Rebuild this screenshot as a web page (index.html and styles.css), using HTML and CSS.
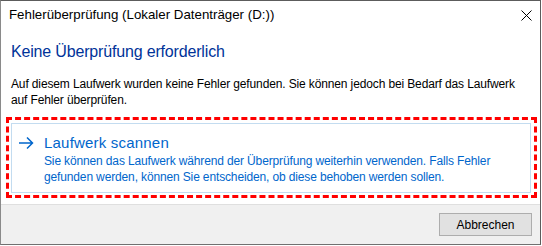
FILE: index.html
```html
<!DOCTYPE html>
<html lang="de">
<head>
    <meta charset="UTF-8">
    <title>Fehlerüberprüfung</title>
    <link rel="stylesheet" href="styles.css">
</head>
<body>
    <div class="window">
        <div class="titlebar">
            <span class="title">Fehlerüberprüfung (Lokaler Datenträger (D:))</span>
            <svg class="close" width="11" height="11" viewBox="0 0 11 11">
                <path d="M0.5 0.5 L10.5 10.5 M10.5 0.5 L0.5 10.5" stroke="#000" stroke-width="1" fill="none"/>
            </svg>
        </div>

        <div class="content">
            <h1 class="instruction">Keine Überprüfung erforderlich</h1>
            <p class="message">Auf diesem Laufwerk wurden keine Fehler gefunden. Sie können jedoch bei Bedarf das Laufwerk<br>auf Fehler überprüfen.</p>

            <div class="highlight">
                <div class="command-link">
                    <svg class="arrow" width="16" height="16" viewBox="0 0 16 16">
                        <path d="M1 8 H14.5 M9 2.5 L14.5 8 L9 13.5" stroke="#0066cc" stroke-width="1.5" fill="none"/>
                    </svg>
                    <div class="link-text">
                        <div class="link-title">Laufwerk scannen</div>
                        <div class="link-note">Sie können das Laufwerk während der Überprüfung weiterhin verwenden. Falls Fehler<br>gefunden werden, können Sie entscheiden, ob diese behoben werden sollen.</div>
                    </div>
                </div>
            </div>
        </div>

        <div class="footer">
            <button class="button">Abbrechen</button>
        </div>
    </div>
</body>
</html>
```

FILE: styles.css
```css
* {
    box-sizing: border-box;
    margin: 0;
    padding: 0;
}
html, body {
    background: #fff;
    font-family: "Liberation Sans", Arial, sans-serif;
    font-size: 12px;
    color: #000;
}
.window {
    width: 541px;
    height: 245px;
    display: flex;
    flex-direction: column;
    border-top: 1px solid #5c5c5c;
    border-left: 1px solid #8a8a8a;
    border-right: 1px solid #5c5c5c;
    border-bottom: 1px solid #707070;
}
.titlebar {
    height: 30px;
    display: flex;
    justify-content: space-between;
    align-items: flex-start;
    padding: 6px 8px 0 8px;
}
.title {
    font-size: 13.3px;
    line-height: 16px;
    white-space: nowrap;
}
.close {
    margin-top: 3px;
}
.content {
    padding: 0 3px 0 5px;
}
.instruction {
    margin: 10px 5px 0 5px;
    font-size: 16px;
    font-weight: normal;
    line-height: 22px;
    letter-spacing: -0.17px;
    color: #003399;
    white-space: nowrap;
}
.message {
    margin: 13px 5px 0 5px;
    line-height: 16px;
    letter-spacing: -0.13px;
    white-space: nowrap;
}
.highlight {
    margin-top: 9px;
    border: 3px dashed #ff0000;
    padding: 3px 3px 2px 2px;
}
.command-link {
    height: 70px;
    display: flex;
    gap: 10px;
    padding: 9px 0 0 6px;
    border: 1px solid #c3dcf0;
    background: #fff;
}
.arrow {
    margin-top: 2px;
}
.link-title {
    font-size: 15px;
    line-height: 20px;
    letter-spacing: 0.2px;
    color: #0066cc;
}
.link-note {
    line-height: 16px;
    letter-spacing: -0.14px;
    color: #0066cc;
    white-space: nowrap;
}
.footer {
    margin-top: auto;
    height: 40px;
    display: flex;
    justify-content: flex-end;
    align-items: flex-start;
    padding: 8px 8px 0 0;
    background: #f0f0f0;
    border-top: 1px solid #dfdfdf;
}
.button {
    width: 93px;
    height: 23px;
    font-family: "Liberation Sans", Arial, sans-serif;
    font-size: 12px;
    color: #000;
    background: #e1e1e1;
    border: 1px solid #adadad;
}
```
